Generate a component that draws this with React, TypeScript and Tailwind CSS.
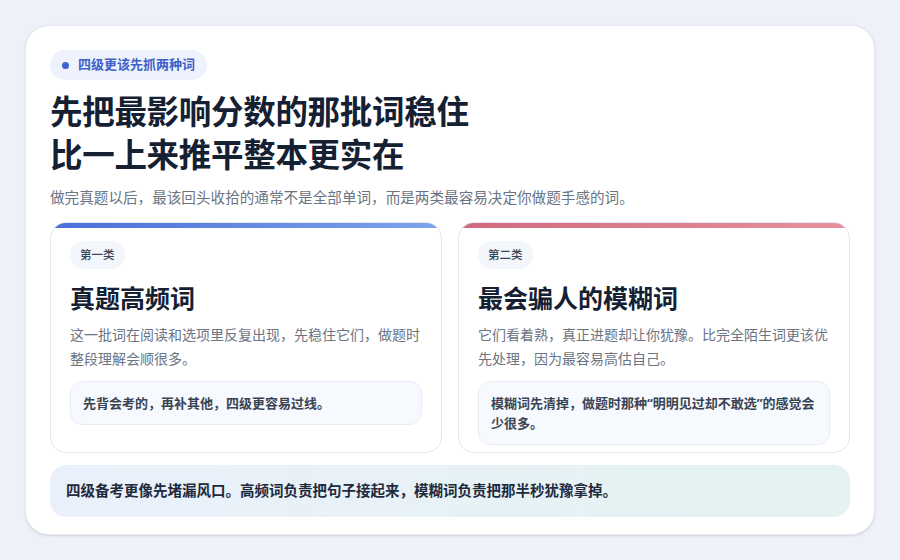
import React from "react";

const cards = [
  {
    tag: "第一类",
    title: "真题高频词",
    desc: "这一批词在阅读和选项里反复出现，先稳住它们，做题时整段理解会顺很多。",
    note: "先背会考的，再补其他，四级更容易过线。",
    bar: "bg-gradient-to-r from-[#4a6fd8] to-[#7fa3ec]",
  },
  {
    tag: "第二类",
    title: "最会骗人的模糊词",
    desc: "它们看着熟，真正进题却让你犹豫。比完全陌生词更该优先处理，因为最容易高估自己。",
    note: "模糊词先清掉，做题时那种“明明见过却不敢选”的感觉会少很多。",
    bar: "bg-gradient-to-r from-[#d06a7e] to-[#e8909e]",
  },
];

const App = () => {
  return (
    <div
      className="w-[900px] h-[560px] bg-[#eef1f7] p-[25px]"
      style={{ fontFamily: '"Noto Sans", "Noto Sans CJK SC", sans-serif' }}
    >
      <div className="h-[510px] bg-white rounded-[24px] border border-[#e6eaf2] shadow-sm px-[24px] pt-[24px] flex flex-col">
        <div className="self-start flex items-center gap-[9px] h-[30px] px-[12px] rounded-full bg-[#eef2fc]">
          <span className="w-[7px] h-[7px] rounded-full bg-[#3f63d6]" />
          <span className="text-[13px] font-bold text-[#3f5fc9]">四级更该先抓两种词</span>
        </div>
        <h1 className="mt-[10px] text-[32.5px] leading-[43px] font-bold text-[#152033] tracking-[-0.3px]">
          先把最影响分数的那批词稳住
          <br />
          比一上来推平整本更实在
        </h1>
        <p className="mt-[10px] text-[14.6px] leading-[22px] text-[#6b7483]">
          做完真题以后，最该回头收拾的通常不是全部单词，而是两类最容易决定你做题手感的词。
        </p>
        <div className="mt-[14px] grid grid-cols-2 gap-[16px]">
          {cards.map((c) => (
            <div key={c.tag} className="relative h-[231px] rounded-[16px] border border-[#e3e7ee] overflow-hidden px-[19px] pt-[18px]">
              <div className={`absolute left-0 right-0 top-0 h-[5px] ${c.bar}`} />
              <span className="inline-flex items-center h-[28px] px-[10px] rounded-full bg-[#f3f6fa] text-[11.5px] font-medium text-[#3b4556]">
                {c.tag}
              </span>
              <h2 className="mt-[12px] text-[25px] leading-[34px] font-bold text-[#152033]">{c.title}</h2>
              <p className="mt-[8px] text-[14px] leading-[24px] text-[#6b7483]">{c.desc}</p>
              <div className="mt-[10px] rounded-[12px] border border-[#e8edf4] bg-[#f6f9fd] px-[12px] py-[11px] text-[13px] leading-[20px] font-bold text-[#3a4353]">
                {c.note}
              </div>
            </div>
          ))}
        </div>
        <div className="mt-[12px] h-[52px] rounded-[16px] bg-gradient-to-r from-[#eaf0fb] to-[#e4f3f1] flex items-center px-[16px] text-[14.5px] font-bold text-[#1e2a3d]">
          四级备考更像先堵漏风口。高频词负责把句子接起来，模糊词负责把那半秒犹豫拿掉。
        </div>
      </div>
    </div>
  );
};

export default App;
